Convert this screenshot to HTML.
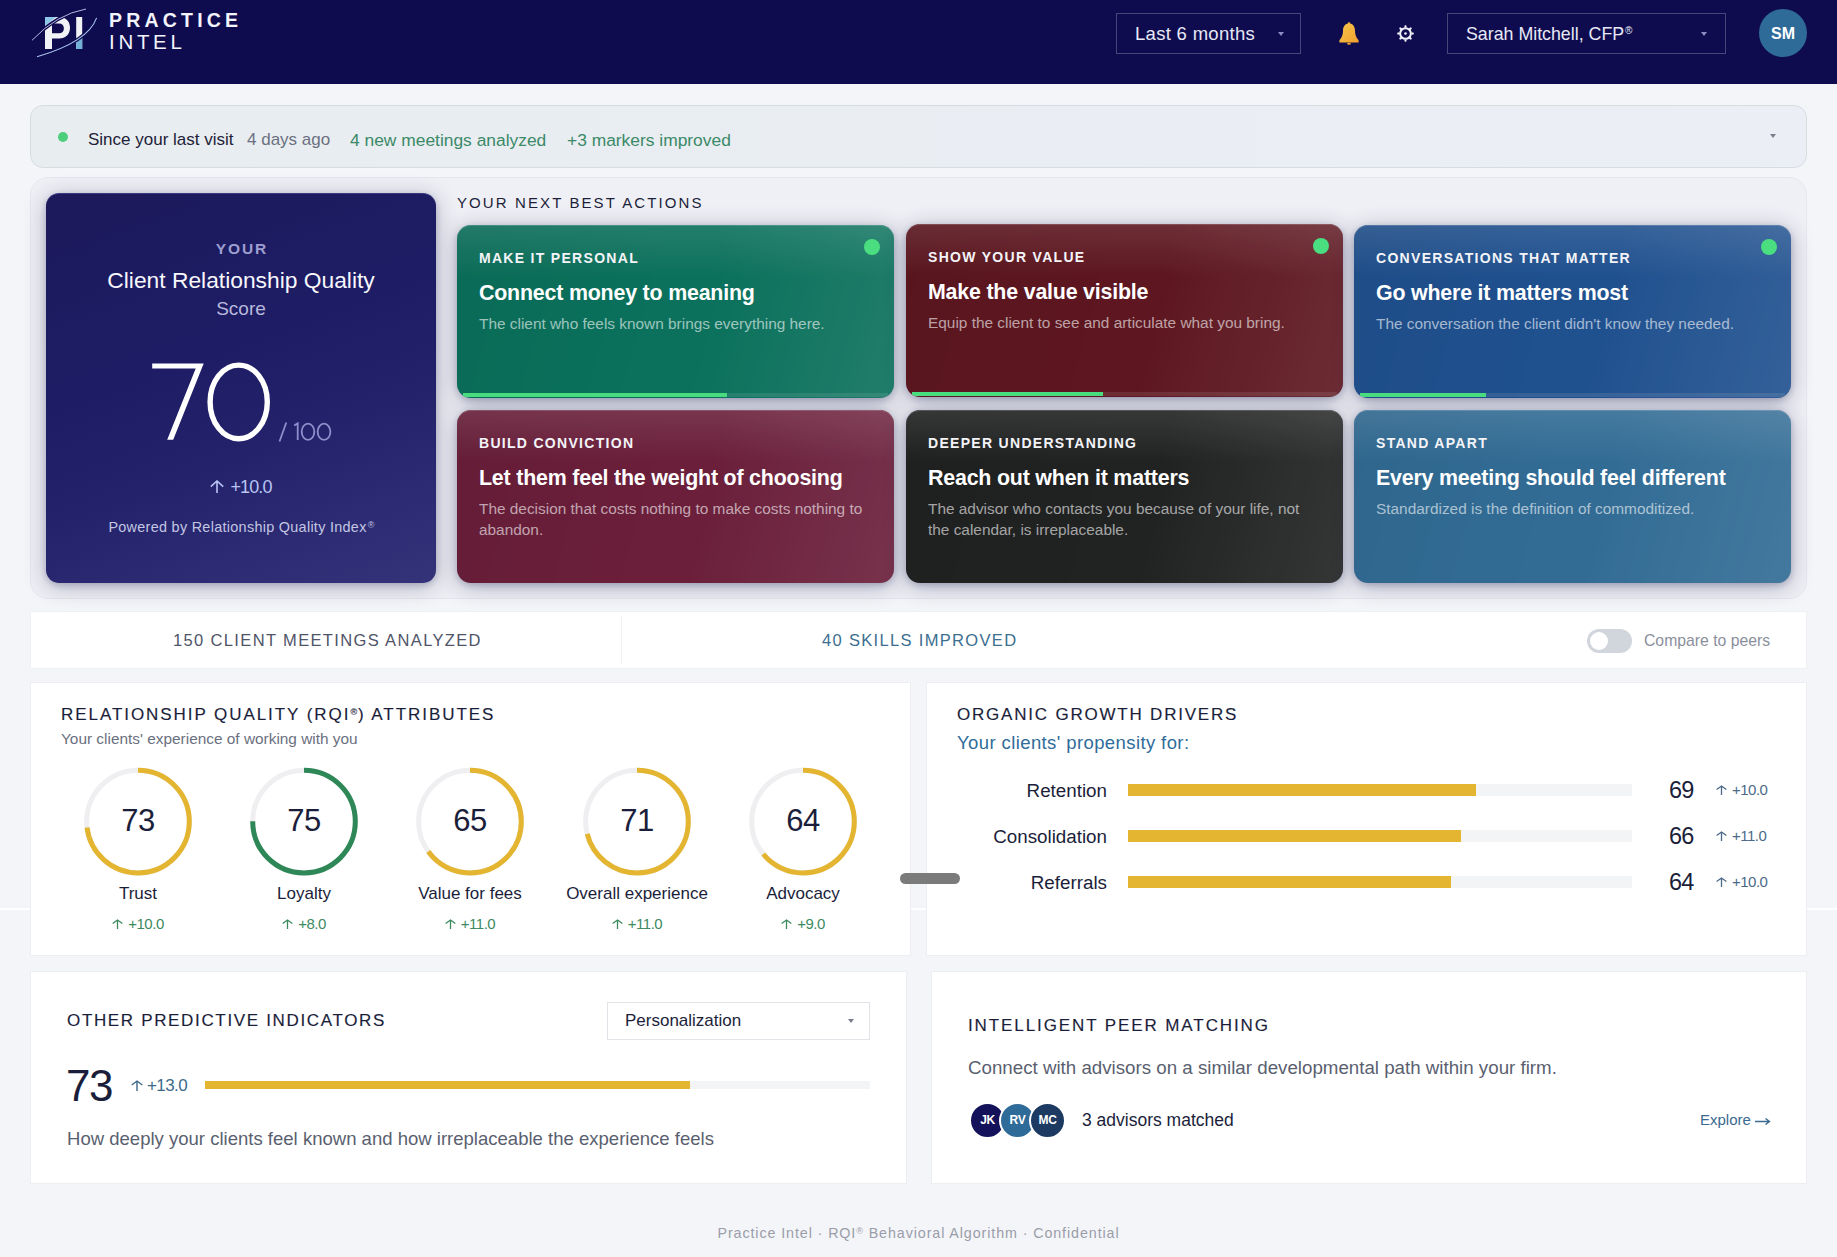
<!DOCTYPE html>
<html><head><meta charset="utf-8">
<style>
*{box-sizing:border-box;margin:0;padding:0}
html,body{width:1837px;height:1257px;overflow:hidden}
body{background:#f4f5f8;font-family:"Liberation Sans",sans-serif;position:relative;color:#1d1f3a}
.abs{position:absolute}
.hdr{left:0;top:0;width:1837px;height:84px;background:#0e0c4e}
.brand1{left:109px;top:9px;font-size:19.5px;font-weight:700;color:#f2f3fb;letter-spacing:4.2px;white-space:nowrap}
.brand2{left:109px;top:30px;font-size:20.5px;color:#f2f3fb;letter-spacing:3.7px;white-space:nowrap}
.dd{border:1px solid rgba(255,255,255,0.24);color:#e8e8f6;font-size:18.5px;letter-spacing:0.3px;white-space:nowrap}
.dd .t{position:absolute;top:9px}
.dd sup{font-size:10px;vertical-align:top;position:relative;top:1px;left:1px;letter-spacing:0}
.caret{position:absolute;width:0;height:0;border-left:3px solid transparent;border-right:3px solid transparent;border-top:4px solid #8c8cc0}
.avatar{left:1759px;top:9px;width:48px;height:48px;border-radius:50%;background:#2f6b98;color:#fff;font-weight:700;font-size:16px;text-align:center;line-height:50px}
.banner{left:30px;top:105px;width:1777px;height:63px;border-radius:13px;background:linear-gradient(90deg,#e8edf0,#ebeef5);border:1px solid #d6dde1}
.banner span{position:absolute;top:24px;font-size:17px;white-space:nowrap}
.hero{left:30px;top:177px;width:1777px;height:422px;border-radius:18px;background:#eff0f5;border:1px solid #e6e7ee}

.score{left:46px;top:193px;width:390px;height:390px;border-radius:13px;background:linear-gradient(160deg,#1c1a5c 0%,#1e1c64 40%,#22216a 60%,#34337a 100%);box-shadow:0 2px 6px rgba(30,30,80,0.2),0 4px 22px rgba(30,30,80,0.3);border-top:1px solid #3a3a82}
.score .c{position:absolute;left:0;width:390px;text-align:center;white-space:nowrap}
.sec-t{font-size:15px;letter-spacing:2.1px;color:#1c1e3a;white-space:nowrap}
.card{width:437px;height:173px;border-radius:14px;overflow:hidden;box-shadow:0 2px 6px rgba(30,30,80,0.22),0 4px 22px rgba(30,30,80,0.32)}
.card .lb{position:absolute;left:22px;top:25px;font-size:14px;font-weight:700;letter-spacing:1.3px;color:#f4f4f8;white-space:nowrap}
.card .ti{position:absolute;left:22px;top:55.5px;font-size:21.4px;font-weight:700;color:#fff;white-space:nowrap;letter-spacing:-0.2px}
.card .ds{position:absolute;left:22px;top:87.5px;width:395px;font-size:15.4px;line-height:21px;color:rgba(255,255,255,0.6);letter-spacing:0}
.card .dot{position:absolute;left:407px;top:14px;width:16px;height:16px;border-radius:50%;background:#4ade80}
.card .pb{position:absolute;left:6px;bottom:1px;height:4px;background:#4ade80}
.card .tr{position:absolute;left:6px;right:6px;bottom:1px;height:4px;background:rgba(255,255,255,0.1)}
.card:before{content:"";position:absolute;inset:0;border-radius:14px;box-shadow:inset 0 1px 0 rgba(255,255,255,0.16);background:linear-gradient(180deg,rgba(255,255,255,0.1) 0%,rgba(255,255,255,0) 30%),linear-gradient(105deg,rgba(0,0,0,0.05) 0%,rgba(0,0,0,0) 45%,rgba(255,255,255,0) 55%,rgba(255,255,255,0.09) 100%)}

.panel{background:#fff;border:1px solid #eceef2}
.pt{font-size:16.5px;letter-spacing:3.2px;color:#1b1e3a;white-space:nowrap}
.txt{white-space:nowrap}
</style><style>
.av{top:1102px;width:37px;height:37px;border-radius:50%;border:2px solid #fff;color:#fff;font-size:12px;font-weight:700;text-align:center;line-height:33px;letter-spacing:-0.3px}
.pt{font-size:17px;-webkit-text-stroke:0.15px #1b1e3a}
</style></head><body>
<div class="abs hdr"></div>
<svg class="abs" style="left:25px;top:5px" width="80" height="60" viewBox="25 5 80 60">
<path d="M45 17h14c6.8 0 11 4.3 11 10.7s-4.2 10.7-11 10.7H52V49h-7z M52 23.6v9.6h7c3 0 4.9-1.8 4.9-4.8s-1.9-4.8-4.9-4.8z" fill="#f1f2f5" fill-rule="evenodd"/>
<rect x="76.2" y="17" width="6" height="32" fill="#f1f2f5"/>
<path d="M45 17h11l-11 9z" fill="#8ec6ea"/>
<path d="M76.2 39.6 L82.2 35.8 V49 H76.2z" fill="#72b2d8"/>
<path d="M32 40.3 Q57 14 86 9" stroke="#0e0c4e" stroke-width="3.4" fill="none"/>
<path d="M32 40.3 Q57 14 86 9" stroke="#c8c8ee" stroke-width="0.9" fill="none"/>
<path d="M37 56.8 Q88 42 96.6 17.9" stroke="#0e0c4e" stroke-width="3.4" fill="none"/>
<path d="M37 56.8 Q88 42 96.6 17.9" stroke="#a8c2ee" stroke-width="1.1" fill="none"/>
</svg>
<div class="abs brand1">PRACTICE</div>
<div class="abs brand2">INTEL</div>
<div class="abs dd" style="left:1116px;top:13px;width:185px;height:41px"><span class="t" style="left:18px">Last 6 months</span><i class="caret" style="left:161px;top:18px"></i></div>
<div class="abs dd" style="left:1447px;top:13px;width:279px;height:41px"><span class="t" style="left:18px;font-size:17.8px;letter-spacing:0;top:10px">Sarah Mitchell, CFP<sup>®</sup></span><i class="caret" style="left:253px;top:18px"></i></div>
<svg class="abs" style="left:1336px;top:20px" width="26" height="26" viewBox="0 0 26 26">
<defs><linearGradient id="bell" x1="0" y1="0" x2="1" y2="1"><stop offset="0" stop-color="#f7c64a"/><stop offset="1" stop-color="#f0a030"/></linearGradient></defs>
<circle cx="13" cy="3.6" r="1.3" fill="#f2b43a"/>
<path d="M13 3.5c-4.2 0-6 3.4-6 7.2 0 4.2-1.2 6.6-3.6 9.6v2.2h19.2v-2.2c-2.4-3-3.6-5.4-3.6-9.6 0-3.8-1.8-7.2-6-7.2z" fill="url(#bell)"/>
<ellipse cx="13" cy="23.8" rx="2" ry="1" fill="#e9a230"/>
</svg>
<svg class="abs" style="left:1395px;top:23px" width="21" height="21" viewBox="-10.5 -10.5 21 21">
<g fill="#f2f2fa"><path d="M-1.3 -6 L-0.7 -8.3 L0.7 -8.3 L1.3 -6 Z" transform="rotate(0)"/><path d="M-1.3 -6 L-0.7 -8.3 L0.7 -8.3 L1.3 -6 Z" transform="rotate(45)"/><path d="M-1.3 -6 L-0.7 -8.3 L0.7 -8.3 L1.3 -6 Z" transform="rotate(90)"/><path d="M-1.3 -6 L-0.7 -8.3 L0.7 -8.3 L1.3 -6 Z" transform="rotate(135)"/><path d="M-1.3 -6 L-0.7 -8.3 L0.7 -8.3 L1.3 -6 Z" transform="rotate(180)"/><path d="M-1.3 -6 L-0.7 -8.3 L0.7 -8.3 L1.3 -6 Z" transform="rotate(225)"/><path d="M-1.3 -6 L-0.7 -8.3 L0.7 -8.3 L1.3 -6 Z" transform="rotate(270)"/><path d="M-1.3 -6 L-0.7 -8.3 L0.7 -8.3 L1.3 -6 Z" transform="rotate(315)"/></g>
<circle r="5.35" stroke="#f2f2fa" stroke-width="2" fill="none"/><circle r="1.3" fill="#f2f2fa"/>
</svg>
<div class="abs avatar">SM</div>

<div class="abs banner">
<i class="abs" style="left:27px;top:26px;width:10px;height:10px;border-radius:50%;background:#4ccf7c"></i>
<span style="left:57px;color:#1e2238">Since your last visit</span>
<span style="left:216px;color:#6b7080">4 days ago</span>
<span style="left:319px;color:#3b8a68;font-size:17.4px;top:23.5px">4 new meetings analyzed</span>
<span style="left:536px;color:#3b8a68;font-size:17.4px;top:23.5px">+3 markers improved</span>
<i class="caret" style="left:1739px;top:28px;border-top-color:#7a7d8c"></i>
</div>
<div class="abs hero"></div>
<div class="abs score">
 <div class="c" style="top:46px;font-size:15.5px;font-weight:700;letter-spacing:1.9px;color:#9d9fd0;padding-left:2px">YOUR</div>
 <div class="c" style="top:73px;font-size:22.8px;color:#f7f7fc">Client Relationship Quality</div>
 <div class="c" style="top:104px;font-size:19px;color:#b7b9dd">Score</div>
 <svg class="abs" style="left:0;top:0" width="390" height="390" viewBox="46 193 390 390">
  <path d="M152.2 362.5 H203.7 L173.2 438.7 H167.2 L195.7 367.4 H152.2 Z" fill="#fff"/>
  <ellipse cx="238.7" cy="400.9" rx="28.6" ry="36.8" stroke="#fff" stroke-width="5.4" fill="none"/>
  <g stroke="#8e90cc" stroke-width="1.8" fill="none">
   <path d="M286.3 421.5 L279.5 440.5"/>
   <path d="M294.2 424.6 L297.7 422.4 V438.9"/>
   <ellipse cx="308" cy="430.8" rx="6.3" ry="8.1"/>
   <ellipse cx="324" cy="430.8" rx="6.4" ry="8.1"/>
  </g>
 </svg>
 <div class="c" style="top:283px;font-size:18px;letter-spacing:-0.9px;color:#b9c4f5;padding-left:0px"><svg style="display:inline-block;vertical-align:baseline;margin-right:6px" width="14" height="13" viewBox="0 0 14 13"><path d="M7 13 V1 M0.8 6.6 L7 1 L13.2 6.6" stroke="#b9c4f5" stroke-width="1.6" fill="none"/></svg>+10.0</div>
 <div class="c" style="top:325px;font-size:14.4px;color:#c4c6e3;letter-spacing:0.3px">Powered by Relationship Quality Index<sup style="font-size:9px;vertical-align:top;position:relative;top:1px;left:1px">®</sup></div>
</div>
<div class="abs sec-t" style="left:457px;top:194px">YOUR NEXT BEST ACTIONS</div>
<div class="abs card" style="left:457px;top:225px;background:#0b715c"><div class="lb">MAKE IT PERSONAL</div><div class="ti">Connect money to meaning</div><div class="ds">The client who feels known brings everything here.</div><i class="dot"></i><i class="tr"></i><i class="pb" style="width:264px"></i></div>
<div class="abs card" style="left:906px;top:224px;background:#5e1720"><div class="lb">SHOW YOUR VALUE</div><div class="ti">Make the value visible</div><div class="ds">Equip the client to see and articulate what you bring.</div><i class="dot"></i><i class="tr"></i><i class="pb" style="width:191px"></i></div>
<div class="abs card" style="left:1354px;top:225px;background:#20518f"><div class="lb">CONVERSATIONS THAT MATTER</div><div class="ti">Go where it matters most</div><div class="ds">The conversation the client didn't know they needed.</div><i class="dot"></i><i class="tr"></i><i class="pb" style="width:126px"></i></div>
<div class="abs card" style="left:457px;top:410px;background:#6b1f3b"><div class="lb">BUILD CONVICTION</div><div class="ti">Let them feel the weight of choosing</div><div class="ds">The decision that costs nothing to make costs nothing to abandon.</div></div>
<div class="abs card" style="left:906px;top:410px;background:#212222"><div class="lb">DEEPER UNDERSTANDING</div><div class="ti">Reach out when it matters</div><div class="ds">The advisor who contacts you because of your life, not the calendar, is irreplaceable.</div></div>
<div class="abs card" style="left:1354px;top:410px;background:#326c95"><div class="lb">STAND APART</div><div class="ti">Every meeting should feel different</div><div class="ds">Standardized is the definition of commoditized.</div></div>

<div class="abs panel" style="left:30px;top:611px;width:1777px;height:58px;border-color:#eef0f3"></div>
<div class="abs" style="left:621px;top:616px;width:1px;height:48px;background:#f0f1f4"></div>
<div class="abs txt" style="left:173px;top:631px;font-size:16.5px;letter-spacing:1.36px;color:#4f5468">150 CLIENT MEETINGS ANALYZED</div>
<div class="abs txt" style="left:822px;top:631px;font-size:16.5px;letter-spacing:1.33px;color:#3b6e8f">40 SKILLS IMPROVED</div>
<div class="abs" style="left:1587px;top:629px;width:45px;height:24px;border-radius:12px;background:#d1d5dc"></div>
<div class="abs" style="left:1590px;top:632px;width:18px;height:18px;border-radius:50%;background:#fff"></div>
<div class="abs txt" style="left:1644px;top:632px;font-size:15.75px;color:#8b8f9c">Compare to peers</div>

<div class="abs" style="left:0;top:908px;width:1837px;height:2px;background:#fff"></div>
<div class="abs panel" style="left:30px;top:682px;width:881px;height:274px"></div>
<div class="abs panel" style="left:926px;top:682px;width:881px;height:274px"></div>
<div class="abs pt" style="left:61px;top:705px;letter-spacing:1.94px">RELATIONSHIP QUALITY (RQI<sup style="font-size:9px;vertical-align:top;position:relative;top:2px;letter-spacing:1px">®</sup>) ATTRIBUTES</div>
<div class="abs txt" style="left:61px;top:730px;font-size:15.4px;color:#6b7080">Your clients' experience of working with you</div>
<svg class="abs" style="left:0;top:0" width="1837" height="1257"><circle cx="138" cy="821.6" r="51.3" stroke="#efeff2" stroke-width="5" fill="none"/><circle cx="138" cy="821.6" r="51.3" stroke="#e3b531" stroke-width="5" fill="none" stroke-dasharray="235.30 322.33" transform="rotate(-90 138 821.6)"/><circle cx="304" cy="821.6" r="51.3" stroke="#efeff2" stroke-width="5" fill="none"/><circle cx="304" cy="821.6" r="51.3" stroke="#2e8756" stroke-width="5" fill="none" stroke-dasharray="241.75 322.33" transform="rotate(-90 304 821.6)"/><circle cx="470" cy="821.6" r="51.3" stroke="#efeff2" stroke-width="5" fill="none"/><circle cx="470" cy="821.6" r="51.3" stroke="#e3b531" stroke-width="5" fill="none" stroke-dasharray="209.51 322.33" transform="rotate(-90 470 821.6)"/><circle cx="637" cy="821.6" r="51.3" stroke="#efeff2" stroke-width="5" fill="none"/><circle cx="637" cy="821.6" r="51.3" stroke="#e3b531" stroke-width="5" fill="none" stroke-dasharray="228.85 322.33" transform="rotate(-90 637 821.6)"/><circle cx="803" cy="821.6" r="51.3" stroke="#efeff2" stroke-width="5" fill="none"/><circle cx="803" cy="821.6" r="51.3" stroke="#e3b531" stroke-width="5" fill="none" stroke-dasharray="206.29 322.33" transform="rotate(-90 803 821.6)"/></svg>
<div class="abs txt" style="left:78px;width:120px;text-align:center;top:803px;font-size:31px;letter-spacing:-0.5px;color:#1b1e3a">73</div><div class="abs txt" style="left:48px;width:180px;text-align:center;top:884px;font-size:17px;color:#1b1e3a">Trust</div><div class="abs txt" style="left:78px;width:120px;text-align:center;top:915px;font-size:15px;letter-spacing:-0.5px;color:#3d8a5f"><svg style="display:inline-block;vertical-align:baseline;margin-right:5px" width="11" height="10" viewBox="0 0 11 10"><path d="M5.5 10 V0.95 M0.65 4.5 L5.5 0.95 L10.35 4.5" stroke="#3d8a5f" stroke-width="1.3" fill="none" stroke-linecap="butt" stroke-linejoin="miter"/></svg>+10.0</div><div class="abs txt" style="left:244px;width:120px;text-align:center;top:803px;font-size:31px;letter-spacing:-0.5px;color:#1b1e3a">75</div><div class="abs txt" style="left:214px;width:180px;text-align:center;top:884px;font-size:17px;color:#1b1e3a">Loyalty</div><div class="abs txt" style="left:244px;width:120px;text-align:center;top:915px;font-size:15px;letter-spacing:-0.5px;color:#3d8a5f"><svg style="display:inline-block;vertical-align:baseline;margin-right:5px" width="11" height="10" viewBox="0 0 11 10"><path d="M5.5 10 V0.95 M0.65 4.5 L5.5 0.95 L10.35 4.5" stroke="#3d8a5f" stroke-width="1.3" fill="none" stroke-linecap="butt" stroke-linejoin="miter"/></svg>+8.0</div><div class="abs txt" style="left:410px;width:120px;text-align:center;top:803px;font-size:31px;letter-spacing:-0.5px;color:#1b1e3a">65</div><div class="abs txt" style="left:380px;width:180px;text-align:center;top:884px;font-size:17px;color:#1b1e3a">Value for fees</div><div class="abs txt" style="left:410px;width:120px;text-align:center;top:915px;font-size:15px;letter-spacing:-0.5px;color:#3d8a5f"><svg style="display:inline-block;vertical-align:baseline;margin-right:5px" width="11" height="10" viewBox="0 0 11 10"><path d="M5.5 10 V0.95 M0.65 4.5 L5.5 0.95 L10.35 4.5" stroke="#3d8a5f" stroke-width="1.3" fill="none" stroke-linecap="butt" stroke-linejoin="miter"/></svg>+11.0</div><div class="abs txt" style="left:577px;width:120px;text-align:center;top:803px;font-size:31px;letter-spacing:-0.5px;color:#1b1e3a">71</div><div class="abs txt" style="left:547px;width:180px;text-align:center;top:884px;font-size:17px;color:#1b1e3a">Overall experience</div><div class="abs txt" style="left:577px;width:120px;text-align:center;top:915px;font-size:15px;letter-spacing:-0.5px;color:#3d8a5f"><svg style="display:inline-block;vertical-align:baseline;margin-right:5px" width="11" height="10" viewBox="0 0 11 10"><path d="M5.5 10 V0.95 M0.65 4.5 L5.5 0.95 L10.35 4.5" stroke="#3d8a5f" stroke-width="1.3" fill="none" stroke-linecap="butt" stroke-linejoin="miter"/></svg>+11.0</div><div class="abs txt" style="left:743px;width:120px;text-align:center;top:803px;font-size:31px;letter-spacing:-0.5px;color:#1b1e3a">64</div><div class="abs txt" style="left:713px;width:180px;text-align:center;top:884px;font-size:17px;color:#1b1e3a">Advocacy</div><div class="abs txt" style="left:743px;width:120px;text-align:center;top:915px;font-size:15px;letter-spacing:-0.5px;color:#3d8a5f"><svg style="display:inline-block;vertical-align:baseline;margin-right:5px" width="11" height="10" viewBox="0 0 11 10"><path d="M5.5 10 V0.95 M0.65 4.5 L5.5 0.95 L10.35 4.5" stroke="#3d8a5f" stroke-width="1.3" fill="none" stroke-linecap="butt" stroke-linejoin="miter"/></svg>+9.0</div>
<div class="abs" style="left:900px;top:873px;width:60px;height:11px;border-radius:6px;background:#7b7b7b"></div>
<div class="abs pt" style="left:957px;top:705px;letter-spacing:1.79px">ORGANIC GROWTH DRIVERS</div>
<div class="abs txt" style="left:957px;top:732px;font-size:18.5px;letter-spacing:0.4px;color:#2f6c9a">Your clients' propensity for:</div>
<div class="abs txt" style="left:907px;width:200px;text-align:right;top:779.5px;font-size:18.8px;color:#1b1e3a">Retention</div><div class="abs" style="left:1128px;top:784px;width:504px;height:12px;background:#f3f4f6"></div><div class="abs" style="left:1128px;top:784px;width:347.8px;height:12px;background:#e3b531"></div><div class="abs txt" style="left:1669px;top:777px;font-size:23.5px;letter-spacing:-0.8px;color:#1b1e3a">69</div><div class="abs txt" style="left:1716px;top:781px;font-size:15px;letter-spacing:-0.5px;color:#4b6a88"><svg style="display:inline-block;vertical-align:baseline;margin-right:5px" width="11" height="10" viewBox="0 0 11 10"><path d="M5.5 10 V0.95 M0.65 4.5 L5.5 0.95 L10.35 4.5" stroke="#4b6a88" stroke-width="1.3" fill="none" stroke-linecap="butt" stroke-linejoin="miter"/></svg>+10.0</div><div class="abs txt" style="left:907px;width:200px;text-align:right;top:825.5px;font-size:18.8px;color:#1b1e3a">Consolidation</div><div class="abs" style="left:1128px;top:830px;width:504px;height:12px;background:#f3f4f6"></div><div class="abs" style="left:1128px;top:830px;width:332.6px;height:12px;background:#e3b531"></div><div class="abs txt" style="left:1669px;top:823px;font-size:23.5px;letter-spacing:-0.8px;color:#1b1e3a">66</div><div class="abs txt" style="left:1716px;top:827px;font-size:15px;letter-spacing:-0.5px;color:#4b6a88"><svg style="display:inline-block;vertical-align:baseline;margin-right:5px" width="11" height="10" viewBox="0 0 11 10"><path d="M5.5 10 V0.95 M0.65 4.5 L5.5 0.95 L10.35 4.5" stroke="#4b6a88" stroke-width="1.3" fill="none" stroke-linecap="butt" stroke-linejoin="miter"/></svg>+11.0</div><div class="abs txt" style="left:907px;width:200px;text-align:right;top:871.5px;font-size:18.8px;color:#1b1e3a">Referrals</div><div class="abs" style="left:1128px;top:876px;width:504px;height:12px;background:#f3f4f6"></div><div class="abs" style="left:1128px;top:876px;width:322.6px;height:12px;background:#e3b531"></div><div class="abs txt" style="left:1669px;top:869px;font-size:23.5px;letter-spacing:-0.8px;color:#1b1e3a">64</div><div class="abs txt" style="left:1716px;top:873px;font-size:15px;letter-spacing:-0.5px;color:#4b6a88"><svg style="display:inline-block;vertical-align:baseline;margin-right:5px" width="11" height="10" viewBox="0 0 11 10"><path d="M5.5 10 V0.95 M0.65 4.5 L5.5 0.95 L10.35 4.5" stroke="#4b6a88" stroke-width="1.3" fill="none" stroke-linecap="butt" stroke-linejoin="miter"/></svg>+10.0</div>

<div class="abs panel" style="left:30px;top:971px;width:877px;height:213px"></div>
<div class="abs panel" style="left:931px;top:971px;width:876px;height:213px"></div>
<div class="abs pt" style="left:67px;top:1011px;letter-spacing:1.66px">OTHER PREDICTIVE INDICATORS</div>
<div class="abs" style="left:607px;top:1002px;width:263px;height:38px;border:1px solid #e1e3e8;background:#fff"></div>
<div class="abs txt" style="left:625px;top:1011px;font-size:17px;color:#1b1e3a">Personalization</div>
<i class="caret abs" style="left:848px;top:1019px;border-top-color:#7a7d8c"></i>
<div class="abs txt" style="left:66px;top:1061px;font-size:44px;letter-spacing:-1.5px;color:#1b1e3a">73</div>
<div class="abs txt" style="left:131px;top:1076px;font-size:17px;letter-spacing:-0.6px;color:#3d6a8a"><svg style="display:inline-block;vertical-align:baseline;margin-right:4px" width="12" height="11" viewBox="0 0 12 11"><path d="M6.0 11 V1.0 M0.7 4.95 L6.0 1.0 L11.3 4.95" stroke="#3d6a8a" stroke-width="1.4" fill="none" stroke-linecap="butt" stroke-linejoin="miter"/></svg>+13.0</div>
<div class="abs" style="left:205px;top:1081px;width:665px;height:8px;background:#f3f4f6"></div>
<div class="abs" style="left:205px;top:1081px;width:485px;height:8px;background:#e3b531"></div>
<div class="abs txt" style="left:67px;top:1128px;font-size:18.55px;color:#5a5f70">How deeply your clients feel known and how irreplaceable the experience feels</div>

<div class="abs pt" style="left:968px;top:1016px;letter-spacing:1.9px">INTELLIGENT PEER MATCHING</div>
<div class="abs txt" style="left:968px;top:1057px;font-size:18.73px;color:#5a5f70">Connect with advisors on a similar developmental path within your firm.</div>
<div class="abs av" style="left:969px;background:#14125a">JK</div>
<div class="abs av" style="left:999px;background:#2f6b98">RV</div>
<div class="abs av" style="left:1029px;background:#1d3a63">MC</div>
<div class="abs txt" style="left:1082px;top:1110px;font-size:17.5px;color:#1b1e3a">3 advisors matched</div>
<div class="abs txt" style="left:1700px;top:1111px;font-size:15px;color:#3a6a8f">Explore</div><svg class="abs" style="left:1754px;top:1117px" width="17" height="9" viewBox="0 0 17 9"><path d="M1 4.5H15.5 M11.5 1.5 L15.5 4.5 L11.5 7.5" stroke="#3a6a8f" stroke-width="1.4" fill="none"/></svg>

<div class="abs txt" style="left:0;width:1837px;text-align:center;top:1225px;font-size:14.3px;letter-spacing:0.9px;color:#9a9daa">Practice Intel · RQI<sup style="font-size:9px;vertical-align:top;position:relative;top:1px">®</sup> Behavioral Algorithm · Confidential</div>
</body></html>
